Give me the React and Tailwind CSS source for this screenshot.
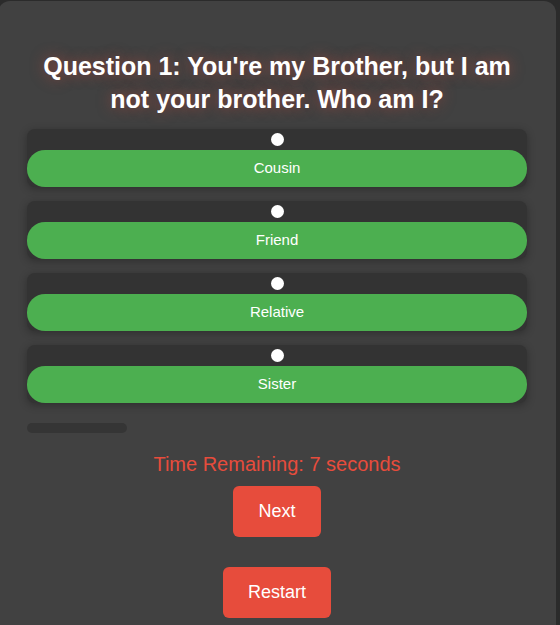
import { useState } from 'react'

const options = ['Cousin', 'Friend', 'Relative', 'Sister']

const App = () => {
    const [selected, setSelected] = useState(null)

    return (
        <div className="min-h-[625px] bg-[#2b2b2b] font-['Liberation_Sans',Arial,sans-serif] overflow-hidden">
            <div className="-ml-[2px] mt-[1px] w-[558px] min-h-[640px] rounded-[12px] bg-[#414141] pt-[49px]">
                <div className="mx-auto w-[500px]">
                    <h2 className="text-center text-[25px] leading-[33px] font-bold text-white [text-shadow:0_0_14px_rgba(231,76,60,0.5)]">
                        Question 1: You're my Brother, but I am not your brother. Who am I?
                    </h2>

                    {/* Options */}
                    <div className="mt-[13px] flex flex-col gap-[14px]">
                        {options.map((opt, i) => (
                            <div key={opt} className="rounded-[8px] bg-[#333333] shadow-[0_2px_8px_rgba(0,0,0,0.3)]">
                                <div className="flex h-[21px] items-center justify-center">
                                    <button
                                        onClick={() => setSelected(i)}
                                        className="h-[13px] w-[13px] rounded-full bg-white"
                                    />
                                </div>
                                <button className="flex h-[37px] w-full items-center justify-center rounded-[18px] bg-[#4caf50] text-[15px] text-white">
                                    {opt}
                                </button>
                            </div>
                        ))}
                    </div>

                    {/* Progress */}
                    <div className="mt-[20px] h-[10px] w-[100px] rounded-full bg-[#353535]" />

                    <p className="mt-[19px] text-center text-[20px] leading-[24px] text-[#e74c3c]">
                        Time Remaining: 7 seconds
                    </p>

                    <div className="mt-[10px] flex flex-col items-center gap-[30px]">
                        <button className="h-[51px] w-[88px] rounded-[6px] bg-[#e74c3c] text-[18px] text-white">
                            Next
                        </button>
                        <button className="h-[51px] w-[108px] rounded-[6px] bg-[#e74c3c] text-[18px] text-white">
                            Restart
                        </button>
                    </div>
                </div>
            </div>
        </div>
    )
}

export default App
